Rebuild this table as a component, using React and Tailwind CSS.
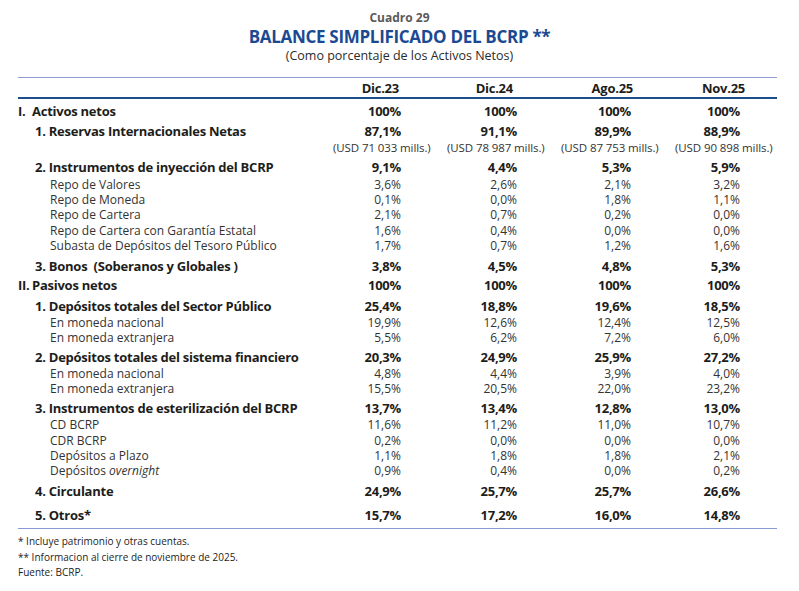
// Cuadro 29 — Balance simplificado del BCRP, as % of net assets.
//
// Each row has an explicit height (distance to the next row's text) and
// draws its text in a 15px line box at the top, so the rhythm of the
// printed table is kept: bold headings get more air than the sub rows.

const FONT = { fontFamily: '"Open Sans", "Noto Sans", sans-serif' };

const HEAD = ['Dic.23', 'Dic.24', 'Ago.25', 'Nov.25'];

// full class strings per column (values, headers)
const VAL_PAD = ['pr-[39px]', 'pr-[58px]', 'pr-[57px]', 'pr-[37px]'];
const HEAD_PAD = ['pr-[41px]', 'pr-[62px]', 'pr-[55px]', 'pr-[32px]'];

const ROWS = [
    { kind: 'roman', num: 'I.', label: 'Activos netos', v: ['100%', '100%', '100%', '100%'], h: 'h-[20px]' },
    { kind: 'bold', label: '1. Reservas Internacionales Netas', v: ['87,1%', '91,1%', '89,9%', '88,9%'], h: 'h-[16px]' },
    { kind: 'usd', v: ['(USD 71 033 mills.)', '(USD 78 987 mills.)', '(USD 87 753 mills.)', '(USD 90 898 mills.)'], h: 'h-[20px]' },
    { kind: 'bold', label: '2. Instrumentos de inyección del BCRP', v: ['9,1%', '4,4%', '5,3%', '5,9%'], h: 'h-[17px]' },
    { kind: 'sub', label: 'Repo de Valores', v: ['3,6%', '2,6%', '2,1%', '3,2%'], h: 'h-[15px]' },
    { kind: 'sub', label: 'Repo de Moneda', v: ['0,1%', '0,0%', '1,8%', '1,1%'], h: 'h-[15px]' },
    { kind: 'sub', label: 'Repo de Cartera', v: ['2,1%', '0,7%', '0,2%', '0,0%'], h: 'h-[16px]' },
    { kind: 'sub', label: 'Repo de Cartera con Garantía Estatal', v: ['1,6%', '0,4%', '0,0%', '0,0%'], h: 'h-[15px]' },
    { kind: 'sub', label: 'Subasta de Depósitos del Tesoro Público', v: ['1,7%', '0,7%', '1,2%', '1,6%'], h: 'h-[21px]' },
    { kind: 'bold', label: '3. Bonos  (Soberanos y Globales )', v: ['3,8%', '4,5%', '4,8%', '5,3%'], h: 'h-[19px]' },
    { kind: 'roman', num: 'II.', label: 'Pasivos netos', v: ['100%', '100%', '100%', '100%'], h: 'h-[21px]' },
    { kind: 'bold', label: '1. Depósitos totales del Sector Público', v: ['25,4%', '18,8%', '19,6%', '18,5%'], h: 'h-[16px]' },
    { kind: 'sub', label: 'En moneda nacional', v: ['19,9%', '12,6%', '12,4%', '12,5%'], h: 'h-[15px]' },
    { kind: 'sub', label: 'En moneda extranjera', v: ['5,5%', '6,2%', '7,2%', '6,0%'], h: 'h-[20px]' },
    { kind: 'bold', label: '2. Depósitos totales del sistema financiero', v: ['20,3%', '24,9%', '25,9%', '27,2%'], h: 'h-[16px]' },
    { kind: 'sub', label: 'En moneda nacional', v: ['4,8%', '4,4%', '3,9%', '4,0%'], h: 'h-[15px]' },
    { kind: 'sub', label: 'En moneda extranjera', v: ['15,5%', '20,5%', '22,0%', '23,2%'], h: 'h-[20px]' },
    { kind: 'bold', label: '3. Instrumentos de esterilización del BCRP', v: ['13,7%', '13,4%', '12,8%', '13,0%'], h: 'h-[16px]' },
    { kind: 'sub', label: 'CD BCRP', v: ['11,6%', '11,2%', '11,0%', '10,7%'], h: 'h-[16px]' },
    { kind: 'sub', label: 'CDR BCRP', v: ['0,2%', '0,0%', '0,0%', '0,0%'], h: 'h-[15px]' },
    { kind: 'sub', label: 'Depósitos a Plazo', v: ['1,1%', '1,8%', '1,8%', '2,1%'], h: 'h-[15px]' },
    { kind: 'sub', label: 'Depósitos', italic: 'overnight', v: ['0,9%', '0,4%', '0,0%', '0,2%'], h: 'h-[21px]' },
    { kind: 'bold', label: '4. Circulante', v: ['24,9%', '25,7%', '25,7%', '26,6%'], h: 'h-[24px]' },
    { kind: 'bold', label: '5. Otros*', v: ['15,7%', '17,2%', '16,0%', '14,8%'], h: 'h-[20px]' },
];

const GRID = 'grid grid-cols-[315px_107px_135px_113px_89px]';
// the USD notes are wider than the last column: evenly spaced, left aligned
const USD_GRID = 'grid grid-cols-[315px_114px_114px_114px_1fr]';
const BOLD = 'font-bold text-[13px] tracking-[-0.25px] text-[#1d1d1b]';
const PLAIN = 'font-normal text-[12px] text-[#333333]';

function Label({ row }) {
    if (row.kind === 'roman') {
        return (
            <div className={`${BOLD} whitespace-pre`}>
                <span className="inline-block w-[14px]">{row.num}</span>{row.label}
            </div>
        );
    }
    if (row.kind === 'bold') {
        return <div className={`pl-[17px] ${BOLD} whitespace-pre`}>{row.label}</div>;
    }
    return (
        <div className={`pl-[32px] ${PLAIN} whitespace-pre`}>
            {row.label}{row.italic && <> <i>{row.italic}</i></>}
        </div>
    );
}

function Row({ row }) {
    if (row.kind === 'usd') {
        return (
            <div className={`${USD_GRID} ${row.h} items-start leading-[15px]`}>
                <div />
                {row.v.map((val, i) => (
                    <div key={i} className="whitespace-nowrap font-normal text-[11.5px] tracking-[-0.1px] text-[#333333]">{val}</div>
                ))}
            </div>
        );
    }
    const strong = row.kind === 'bold' || row.kind === 'roman';
    return (
        <div className={`${GRID} ${row.h} items-start leading-[15px]`}>
            <Label row={row} />
            {row.v.map((val, i) => (
                <div key={i} className={`text-right whitespace-nowrap ${VAL_PAD[i]} ${strong ? BOLD : PLAIN}`}>
                    {val}
                </div>
            ))}
        </div>
    );
}

export default function App() {
    return (
        <div className="w-[799px] h-[591px] bg-white overflow-hidden" style={FONT}>
            <div className="pt-[10px] flex flex-col items-center">
                <div className="text-[12px] leading-[16px] font-bold text-[#5a5a5a]">Cuadro 29</div>
                <div className="text-[17px] leading-[22px] font-bold tracking-[-0.3px] text-[#1b4a92]">BALANCE SIMPLIFICADO DEL BCRP **</div>
                <div className="text-[12.5px] leading-[16px] font-normal text-[#2b2b2b]">(Como porcentaje de los Activos Netos)</div>
            </div>

            <div className="ml-[18px] w-[759px] mt-[13px]">
                <div className="h-px bg-[#919dd2]" />
                <div className={`${GRID} h-[19px] items-center leading-[16px]`}>
                    <div />
                    {HEAD.map((h, i) => (
                        <div key={h} className={`text-right ${BOLD} ${HEAD_PAD[i]}`}>{h}</div>
                    ))}
                </div>
                <div className="h-[2px] bg-[#1c4e8c]" />

                <div className="pt-[5px]">
                    {ROWS.map((r, i) => <Row key={i} row={r} />)}
                </div>
                <div className="h-px bg-[#8a9ad4]" />
            </div>

            <div className="ml-[18px] mt-[5px] text-[10px] leading-[15.5px] font-normal text-[#1d1d1b]">
                <div>* Incluye patrimonio y otras cuentas.</div>
                <div>** Informacion al cierre de noviembre de 2025.</div>
                <div>Fuente: BCRP.</div>
            </div>
        </div>
    );
}
